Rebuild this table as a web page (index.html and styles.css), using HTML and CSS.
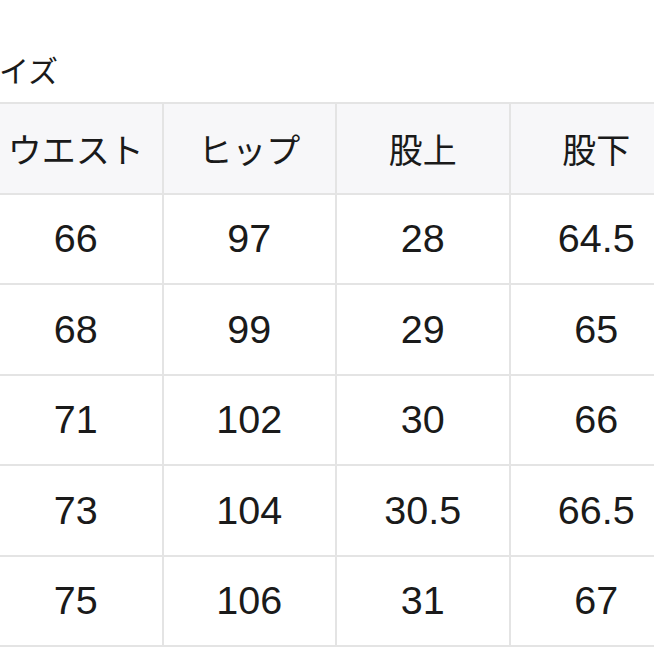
FILE: index.html
```html
<!DOCTYPE html>
<html lang="ja">
<head>
<meta charset="utf-8">
<link rel="stylesheet" href="styles.css">
</head>
<body>
<div class="page">
  <h2 class="title">サイズ</h2>
  <table class="size-table">
    <thead>
      <tr><th>ウエスト</th><th>ヒップ</th><th>股上</th><th>股下</th></tr>
    </thead>
    <tbody>
      <tr><td>66</td><td>97</td><td>28</td><td>64.5</td></tr>
      <tr><td>68</td><td>99</td><td>29</td><td>65</td></tr>
      <tr><td>71</td><td>102</td><td>30</td><td>66</td></tr>
      <tr><td>73</td><td>104</td><td>30.5</td><td>66.5</td></tr>
      <tr><td>75</td><td>106</td><td>31</td><td>67</td></tr>
    </tbody>
  </table>
</div>
</body>
</html>
```

FILE: styles.css
```css
html, body {
  margin: 0;
  padding: 0;
  background: #ffffff;
  overflow: hidden;
}
.page {
  width: 654px;
  height: 654px;
  overflow: hidden;
  font-family: "Liberation Sans", "Noto Sans CJK JP", sans-serif;
  color: #1a1a1a;
}
.title {
  margin: 0 0 0 -31px;
  padding-top: 52px;
  height: 50px;
  font-size: 30px;
  line-height: 34px;
  font-weight: normal;
  font-family: "Noto Sans CJK JP", sans-serif;
}
.size-table {
  margin-left: -12px;
  border-collapse: collapse;
  table-layout: fixed;
  width: 694px;
}
.size-table th,
.size-table td {
  width: 171.5px;
  height: 88.5px;
  border: 2px solid #e4e4e4;
  text-align: center;
  vertical-align: middle;
  padding: 0;
  font-size: 39.5px;
  font-weight: normal;
}
.size-table th {
  background: #f7f7f9;
  font-family: "Noto Sans CJK JP", sans-serif;
  font-size: 34px;
}
```
